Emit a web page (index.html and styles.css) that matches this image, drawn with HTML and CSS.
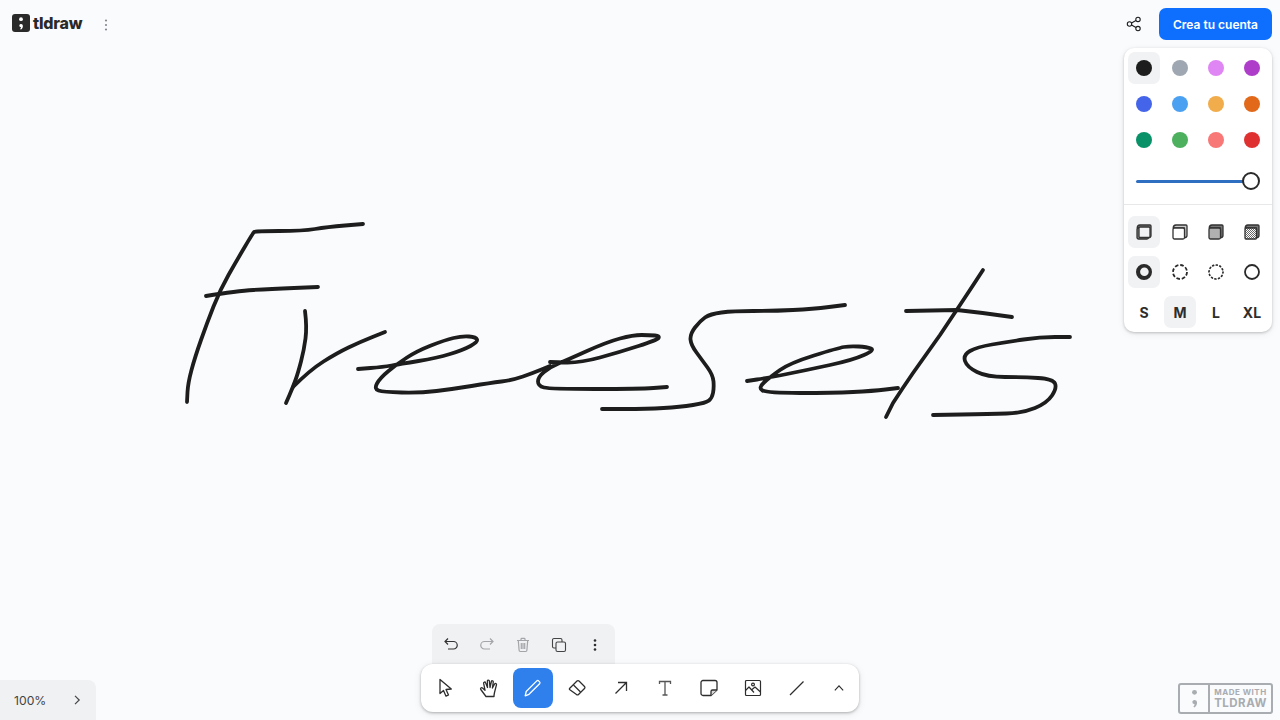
FILE: index.html
```html
<!DOCTYPE html>
<html lang="es">
<head>
<meta charset="utf-8">
<title>tldraw</title>
<link rel="stylesheet" href="styles.css">
</head>
<body>
<main class="app">
  <svg class="canvas" viewBox="0 0 1280 720" fill="none" stroke="#1d1d1d" stroke-width="3.8" stroke-linecap="round" stroke-linejoin="round">
    <path d="M187 402 L187.5 392 Q188 383 191.5 370 Q195 357 201 340 Q207 323 213.5 306.5 Q220 290 228.5 275 Q237 260 245 246.5 Q253 233 254 232 Q256 231 279 231 Q303 231 315 229 Q327 227 345 225.5 L363 224"/>
    <path d="M206 296 Q237 291 253.5 290 Q270 289 294 288 L318 287"/>
    <path d="M305 311 Q307 327 305.5 338.5 Q304 350 301 361.5 Q298 373 295.5 380 Q293 387 289.5 395 L286 403"/>
    <path d="M293 387 Q310 370 323.5 361.5 Q337 353 348.5 347.5 Q360 342 372.5 337 L385 332"/>
    <path d="M358 369 L370.5 368 Q383 367 391.5 365.5 Q400 364 418.5 361 Q437 358 450 354 Q463 350 470.5 346 Q478 342 477 339.5 Q476 337 469 336.5 Q462 336 453.5 338 Q445 340 431 345.5 Q417 351 407 357.5 Q397 364 388.5 371 Q380 378 377 383.5 Q374 389 378.5 390.5 Q383 392 401.5 392.5 Q420 393 436.5 391 Q453 389 471.5 386 Q490 383 501.5 381.5 Q513 380 523 376.5 Q533 373 541.5 369.5 L550 366"/>
    <path d="M550 362 L565 362.5 Q580 363 600 357.5 Q620 352 638.5 346 Q657 340 658.5 338 Q660 336 655 335.5 Q650 335 641.5 335 Q633 335 620 338.5 Q607 342 587 351 Q567 360 558.5 363.5 Q550 367 544 372 Q538 377 538 381.5 Q538 386 544 387.5 Q550 389 595 389 Q640 389 653.5 388 L667 387"/>
    <path d="M845 305 L829 307 Q813 309 793 310 Q773 311 753 311 Q733 311 721.5 312.5 Q710 314 705 317.5 Q700 321 695 327.5 Q690 334 690.5 339.5 Q691 345 696.5 352.5 Q702 360 707.5 367.5 Q713 375 713.5 381.5 Q714 388 713 393 Q712 398 709 400.5 Q706 403 693 405 Q680 407 663.5 408 Q647 409 624.5 409 L602 409"/>
    <path d="M747 381 L757 379.5 Q767 378 787 374 Q807 370 830 365 Q853 360 864 355 Q875 350 871 348.5 Q867 347 858.5 346.5 Q850 346 844 347 Q838 348 814 355.5 Q790 363 780 370 Q770 377 764 382.5 Q758 388 762.5 390.5 Q767 393 800 393 Q833 393 853 392 Q873 391 885.5 389.5 L898 388"/>
    <path d="M983 270 Q972 287 960 305 L940 335 L913 373 Q902 389 893 403 L886 417"/>
    <path d="M906 311 L957 310 Q985 313 1012 317"/>
    <path d="M1070 337 L1055 337 Q1040 337 1023.5 339.5 Q1007 342 992 344.5 Q977 347 970 351 Q963 355 965 361 Q967 367 977 372 Q987 377 1005 377 Q1023 377 1038 378 Q1053 379 1055 383.5 Q1057 388 1052 395.5 Q1047 403 1035 408 Q1023 413 1006.5 413.5 Q990 414 961.5 414.5 L933 415"/>
  </svg>

  <div class="ui">
    <header class="top">
      <div class="brand">
        <svg class="logo" viewBox="0 0 18 18"><rect width="18" height="18" rx="3" fill="#2a2a2a"/><circle cx="9" cy="5.2" r="1.9" fill="#fff"/><path d="M7.3 11.2a1.9 1.9 0 0 1 3.6.5c.1 1.6-.7 3.1-2 3.9l-.8-.7c.5-.5.8-1 .9-1.7a1.9 1.9 0 0 1-1.7-2z" fill="#fff"/></svg>
        <span class="wordmark">tldraw</span>
        <svg class="brand-menu" viewBox="0 0 4 12" fill="#85888c"><circle cx="2" cy="1.5" r="1.1"/><circle cx="2" cy="6" r="1.1"/><circle cx="2" cy="10.5" r="1.1"/></svg>
      </div>
      <div class="account">
        <svg class="share" viewBox="0 0 16 16" fill="none" stroke="#1d1d1d" stroke-width="1.1"><circle cx="3.5" cy="8" r="2.2"/><circle cx="12" cy="3.4" r="2.2"/><circle cx="12" cy="12.6" r="2.2"/><path d="M5.5 7 10 4.5M5.5 9 10 11.5"/></svg>
        <button class="cta">Crea tu cuenta</button>
      </div>
    </header>

    <div class="panel-row">
      <aside class="panel">
        <div class="colors">
          <div class="cell selected"><span class="dot c-black"></span></div>
          <div class="cell"><span class="dot c-grey"></span></div>
          <div class="cell"><span class="dot c-lviolet"></span></div>
          <div class="cell"><span class="dot c-violet"></span></div>
          <div class="cell"><span class="dot c-blue"></span></div>
          <div class="cell"><span class="dot c-lblue"></span></div>
          <div class="cell"><span class="dot c-yellow"></span></div>
          <div class="cell"><span class="dot c-orange"></span></div>
          <div class="cell"><span class="dot c-green"></span></div>
          <div class="cell"><span class="dot c-lgreen"></span></div>
          <div class="cell"><span class="dot c-lred"></span></div>
          <div class="cell"><span class="dot c-red"></span></div>
        </div>
        <div class="slider"><div class="track"></div><div class="thumb"></div></div>
        <div class="options">
          <div class="cell selected"><svg class="ico16" viewBox="0 0 16 16" stroke="#333" stroke-width="1.3" stroke-linejoin="round"><path d="M4 1h10a1 1 0 0 1 1 1v9.500a2 2 0 0 1-2.500 2V4H1.200A3 3 0 0 1 4 1z" fill="#888"/><rect x="1" y="4" width="11.500" height="11" rx="1.500" fill="#888"/><rect x="3" y="3" width="11" height="10.500" rx="1" fill="#f1f2f3"/></svg></div>
          <div class="cell"><svg class="ico16" viewBox="0 0 16 16" stroke="#333" stroke-width="1.300" stroke-linejoin="round"><path d="M4 1h10a1 1 0 0 1 1 1v9.500a2 2 0 0 1-2.500 2V4H1.200A3 3 0 0 1 4 1z" fill="#ccc"/><rect x="1" y="4" width="11.500" height="11" rx="1.500" fill="#fff"/></svg></div>
          <div class="cell"><svg class="ico16" viewBox="0 0 16 16" stroke="#333" stroke-width="1.300" stroke-linejoin="round"><path d="M4 1h10a1 1 0 0 1 1 1v9.500a2 2 0 0 1-2.500 2V4H1.200A3 3 0 0 1 4 1z" fill="#777"/><rect x="1" y="4" width="11.500" height="11" rx="1.500" fill="#b0b0b0"/></svg></div>
          <div class="cell"><svg class="ico16" viewBox="0 0 16 16" stroke="#333" stroke-width="1.300" stroke-linejoin="round"><defs><pattern id="hatch" width="2" height="2" patternUnits="userSpaceOnUse"><rect width="2" height="2" fill="#fff" stroke="none"/><rect width="1" height="1" fill="#666" stroke="none"/><rect x="1" y="1" width="1" height="1" fill="#666" stroke="none"/></pattern></defs><path d="M4 1h10a1 1 0 0 1 1 1v9.500a2 2 0 0 1-2.500 2V4H1.200A3 3 0 0 1 4 1z" fill="#777"/><rect x="1" y="4" width="11.500" height="11" rx="1" fill="url(#hatch)"/></svg></div>

          <div class="cell selected"><svg class="ico16" viewBox="0 0 16 16" fill="#2a2a2a" fill-rule="evenodd"><path d="M8 0a8 8 0 1 1 0 16A8 8 0 0 1 8 0zm.400 3.400a4.300 4.300 0 1 0 0 8.600 4.300 4.300 0 0 0 0-8.600z"/></svg></div>
          <div class="cell"><svg class="ico16" viewBox="0 0 16 16" fill="none" stroke="#2a2a2a" stroke-width="1.800"><circle cx="8" cy="8" r="7" stroke-dasharray="3.600 1.900"/></svg></div>
          <div class="cell"><svg class="ico16" viewBox="0 0 16 16" fill="none" stroke="#2a2a2a" stroke-width="1.700" stroke-linecap="round"><circle cx="8" cy="8" r="7" stroke-dasharray="1 2.670"/></svg></div>
          <div class="cell"><svg class="ico16" viewBox="0 0 16 16" fill="none" stroke="#2a2a2a" stroke-width="1.800"><circle cx="8" cy="8" r="7"/></svg></div>

          <div class="cell size">S</div>
          <div class="cell size selected">M</div>
          <div class="cell size">L</div>
          <div class="cell size">XL</div>
        </div>
      </aside>
    </div>

    <footer class="bottom">
      <div class="zoom">
        <span>100%</span>
        <svg class="ico10" viewBox="0 0 10 10" fill="none" stroke="#444" stroke-width="1.200"><path d="M3 .8 7.200 5 3 9.200"/></svg>
      </div>
      <div class="center">
        <div class="actions">
          <div class="act"><svg class="ico16" viewBox="0 0 16 16" fill="none" stroke="#333" stroke-width="1.200"><path d="M5 1.500 2 4.500l3 3M2 4.500h8.500a3.500 3.500 0 0 1 0 7.500H5"/></svg></div>
          <div class="act"><svg class="ico16" viewBox="0 0 16 16" fill="none" stroke="#a3a5a8" stroke-width="1.200"><path d="M11 1.500l3 3-3 3M14 4.500H5.500a3.500 3.500 0 0 0 0 7.500H11"/></svg></div>
          <div class="act"><svg class="ico16" viewBox="0 0 16 16" fill="none" stroke="#a3a5a8" stroke-width="1.200"><path d="M2 3.500h12M6 3.500V2.200c0-.5.300-.8.800-.8h2.400c.5 0 .8.300.8.800v1.300M3.300 3.500l.8 9.800c0 .7.500 1.200 1.200 1.200h5.400c.7 0 1.200-.5 1.200-1.200l.8-9.800M6.300 6v6M8 6v6M9.700 6v6"/></svg></div>
          <div class="act"><svg class="ico16" viewBox="0 0 16 16" fill="none" stroke="#444" stroke-width="1.100"><rect x="5" y="5" width="9.500" height="9.500" rx="1.500"/><path d="M5 11H3a1.500 1.500 0 0 1-1.500-1.500V3A1.500 1.500 0 0 1 3 1.500h6.500A1.500 1.500 0 0 1 11 3v2"/></svg></div>
          <div class="act"><svg class="ico16" viewBox="0 0 16 16" fill="#2d2d2d"><circle cx="8" cy="3.500" r="1.300"/><circle cx="8" cy="8" r="1.300"/><circle cx="8" cy="12.500" r="1.300"/></svg></div>
        </div>
        <nav class="toolbar">
          <div class="tool"><svg class="ico20" viewBox="0 0 20 20" fill="none" stroke="#2d2d2d" stroke-width="1.300" stroke-linejoin="round"><path d="M5 1.500V15.500L8.500 12.400 11 18.200 13.500 17 11 11.500 16.300 11z"/></svg></div>
          <div class="tool"><svg class="ico20" viewBox="0 0 20 20" fill="none" stroke="#2d2d2d" stroke-width="1.300" stroke-linejoin="round" stroke-linecap="round"><path d="M7 18.500C5.500 16.500 4 14.500 1.800 11.500C1 10.400 2.400 9 3.500 10L6 12.200L4.600 5.200C4.400 4 6.200 3.500 6.600 4.700L8.500 9.500L8.400 3C8.400 1.700 10.300 1.700 10.400 3L11 9.500L12.400 3.500C12.700 2.300 14.400 2.700 14.300 3.900L13.400 10L15.600 6C16.200 5 17.800 5.500 17.500 6.700L15.500 14.500C15.200 16 15 17.200 15 18.500z"/></svg></div>
          <div class="tool active"><svg class="ico20" viewBox="0 0 20 20" fill="none" stroke="#fff" stroke-width="1.300" stroke-linejoin="round"><path d="M3.200 13.500 13.800 2.900a1.300 1.300 0 0 1 1.800 0l1 1a1.300 1.300 0 0 1 0 1.800L6 16.300l-3.800 1.500z"/></svg></div>
          <div class="tool"><svg class="ico20" viewBox="0 0 20 20" fill="none" stroke="#2d2d2d" stroke-width="1.300" stroke-linejoin="round"><path d="M2.500 10.500 10 3a1.400 1.400 0 0 1 2 0l5.500 5.500a1.400 1.400 0 0 1 0 2l-6 6a1.400 1.400 0 0 1-2 0l-7-5a1 1 0 0 1 0-1z"/><path d="M6.500 7 13.500 14"/></svg></div>
          <div class="tool"><svg class="ico20" viewBox="0 0 20 20" fill="none" stroke="#2d2d2d" stroke-width="1.300"><path d="M4.500 15.500 15.500 4.500M7 4.500h8.500V13"/></svg></div>
          <div class="tool"><svg class="ico20" viewBox="0 0 20 20" fill="none" stroke="#555" stroke-width="1.300"><path d="M4.500 6V3.500h11V6M10 3.500v13.500M7.500 17h5"/></svg></div>
          <div class="tool"><svg class="ico20" viewBox="0 0 20 20" fill="none" stroke="#2d2d2d" stroke-width="1.300" stroke-linejoin="round"><path d="M12 17.500H4a2 2 0 0 1-2-2V4.500a2 2 0 0 1 2-2h12a2 2 0 0 1 2 2v7.500z"/><path d="M12 17.500V13.500a1.500 1.500 0 0 1 1.500-1.500H18" fill="#d8d8d8"/></svg></div>
          <div class="tool"><svg class="ico20" viewBox="0 0 20 20" fill="none" stroke="#2d2d2d" stroke-width="1.200" stroke-linejoin="round"><rect x="2.500" y="2.500" width="15" height="15" rx="1"/><circle cx="10" cy="6.500" r="1.400"/><path d="M2.500 12.500 6 9l5 5.500M9 11.500l3-2.500 5.500 5"/></svg></div>
          <div class="tool"><svg class="ico20" viewBox="0 0 20 20" fill="none" stroke="#2d2d2d" stroke-width="1.300"><path d="M3 17 16.500 3.500"/></svg></div>
          <div class="tool chevron"><svg class="ico10" viewBox="0 0 12 8" fill="none" stroke="#2d2d2d" stroke-width="1.400"><path d="M1 6.800 6 1.500l5 5.300"/></svg></div>
        </nav>
      </div>
      <div class="mark-wrap">
        <div class="mark">
          <div class="mark-icon"><svg viewBox="0 0 8 18" width="9" height="20" fill="#a9acb0"><circle cx="4" cy="3" r="2.200"/><path d="M2 11.500a2.200 2.200 0 0 1 4.300.5c.1 2-.8 3.800-2.400 4.700l-.9-.8c.6-.6 1-1.300 1.100-2.100A2.200 2.200 0 0 1 2 11.500z"/></svg></div>
          <div class="mark-text"><span class="mark-small">MADE WITH</span><span class="mark-big">TLDRAW</span></div>
        </div>
      </div>
    </footer>
  </div>
</main>
</body>
</html>
```
FILE: styles.css
```css
* { box-sizing: border-box; }
html, body { margin: 0; height: 100%; overflow: hidden; }
body { background: #f9fbfd; font-family: Inter, "Liberation Sans", sans-serif; color: #1d1d1d; }

.app { position: relative; width: 100%; height: 100vh; }
.canvas { position: absolute; inset: 0; width: 100%; height: 100%; }
.ui { position: absolute; inset: 0; display: flex; flex-direction: column; }

.top { display: flex; justify-content: space-between; align-items: center; height: 48px; padding: 0 8px 0 12px; }
.brand { display: flex; align-items: center; }
.logo { width: 18px; height: 18px; margin-top: -2px; }
.wordmark { font-size: 16px; font-weight: 800; letter-spacing: -0.2px; margin-left: 3px; margin-top: -2px; color: #2a2a2a; }
.brand-menu { width: 4px; height: 12px; margin-left: 22px; margin-top: 1px; }
.account { display: flex; align-items: center; gap: 17px; }
.share { width: 16px; height: 16px; }
.cta { width: 113px; height: 32px; border: 0; border-radius: 7px; background: #0e6ffe; color: #fff; font: 600 12px Inter, "Liberation Sans", sans-serif; padding: 0; }

.panel-row { flex: 1; display: flex; justify-content: flex-end; padding-right: 8px; }
.panel { width: 148px; height: 284px; padding: 2px; background: #fff; border-radius: 10px; box-shadow: 0 1px 3px rgba(0,0,0,.22), 0 2px 8px rgba(0,0,0,.06); }
.colors, .options { display: grid; grid-template-columns: repeat(4, 36px); }
.options { row-gap: 4px; border-top: 1px solid #e6e8ea; padding-top: 9px; margin: 0 -2px; padding-left: 2px; }
.cell { width: 36px; height: 36px; display: flex; align-items: center; justify-content: center; position: relative; z-index: 0; }
.cell.selected::before { content: ""; position: absolute; inset: 2px; border-radius: 7px; background: #f1f2f3; z-index: -1; }
.dot { width: 16px; height: 16px; border-radius: 50%; }
.c-black { background: #1d1d1d; } .c-grey { background: #9fa8b2; } .c-lviolet { background: #e085f4; } .c-violet { background: #ae3ec9; }
.c-blue { background: #4465e9; } .c-lblue { background: #4ba1f1; } .c-yellow { background: #f1ac4b; } .c-orange { background: #e16919; }
.c-green { background: #099268; } .c-lgreen { background: #4cb05e; } .c-lred { background: #f87777; } .c-red { background: #e03131; }

.slider { height: 46px; margin: 0 10px; display: flex; align-items: center; position: relative; }
.track { width: 116px; height: 3px; border-radius: 2px; background: #2f6fc2; }
.thumb { position: absolute; right: 0; top: 14px; width: 18px; height: 18px; border-radius: 50%; border: 2px solid #2a2a2a; background: #fff; }
.size { font-size: 14px; font-weight: 700; color: #2d2d2d; }

.ico10 { width: 10px; height: 10px; display: block; }
.ico16 { width: 16px; height: 16px; display: block; }
.ico20 { width: 20px; height: 20px; display: block; }

.bottom { position: absolute; left: 0; right: 0; bottom: 0; display: grid; grid-template-columns: 1fr auto 1fr; align-items: end; }
.zoom { width: 96px; height: 40px; background: #f0f1f3; border-top-right-radius: 8px; display: flex; align-items: center; justify-content: space-between; padding: 0 14px 0 14px; font-size: 12.2px; color: #444; }
.center { display: flex; flex-direction: column; align-items: flex-start; padding-bottom: 8px; }
.actions { width: 183px; height: 40px; margin-left: 11px; display: flex; padding: 0 1px; background: #f0f1f3; border-radius: 8px 8px 0 0; }
.act { width: 36px; height: 40px; display: flex; align-items: center; justify-content: center; padding-top: 2px; }
.toolbar { width: 438px; height: 48px; display: flex; align-items: center; padding: 0 0 0 2px; background: #fff; border-radius: 12px; box-shadow: 0 1px 3px rgba(0,0,0,.28), 0 2px 8px rgba(0,0,0,.08); }
.tool { flex: none; width: 44px; height: 40px; display: flex; align-items: center; justify-content: center; position: relative; z-index: 0; }
.tool.chevron { width: 40px; }
.tool.active::before { content: ""; position: absolute; top: 0; bottom: 0; left: 2px; right: 2px; background: #2f80ed; border-radius: 8px; z-index: -1; }

.mark-wrap { display: flex; justify-content: flex-end; padding: 0 7px 6px 0; }
.mark { width: 95px; height: 31px; border: 2px solid #a9acb0; border-radius: 3px; display: flex; color: #a9acb0; background: #f9fbfd; }
.mark-icon { width: 30px; display: flex; align-items: center; justify-content: center; border-right: 2px solid #a9acb0; }
.mark-text { flex: 1; display: flex; flex-direction: column; align-items: center; justify-content: center; font-weight: 700; line-height: 1; }
.mark-small { font-size: 8px; letter-spacing: .5px; }
.mark-big { font-size: 11.5px; letter-spacing: .5px; margin-top: 2px; }
```
